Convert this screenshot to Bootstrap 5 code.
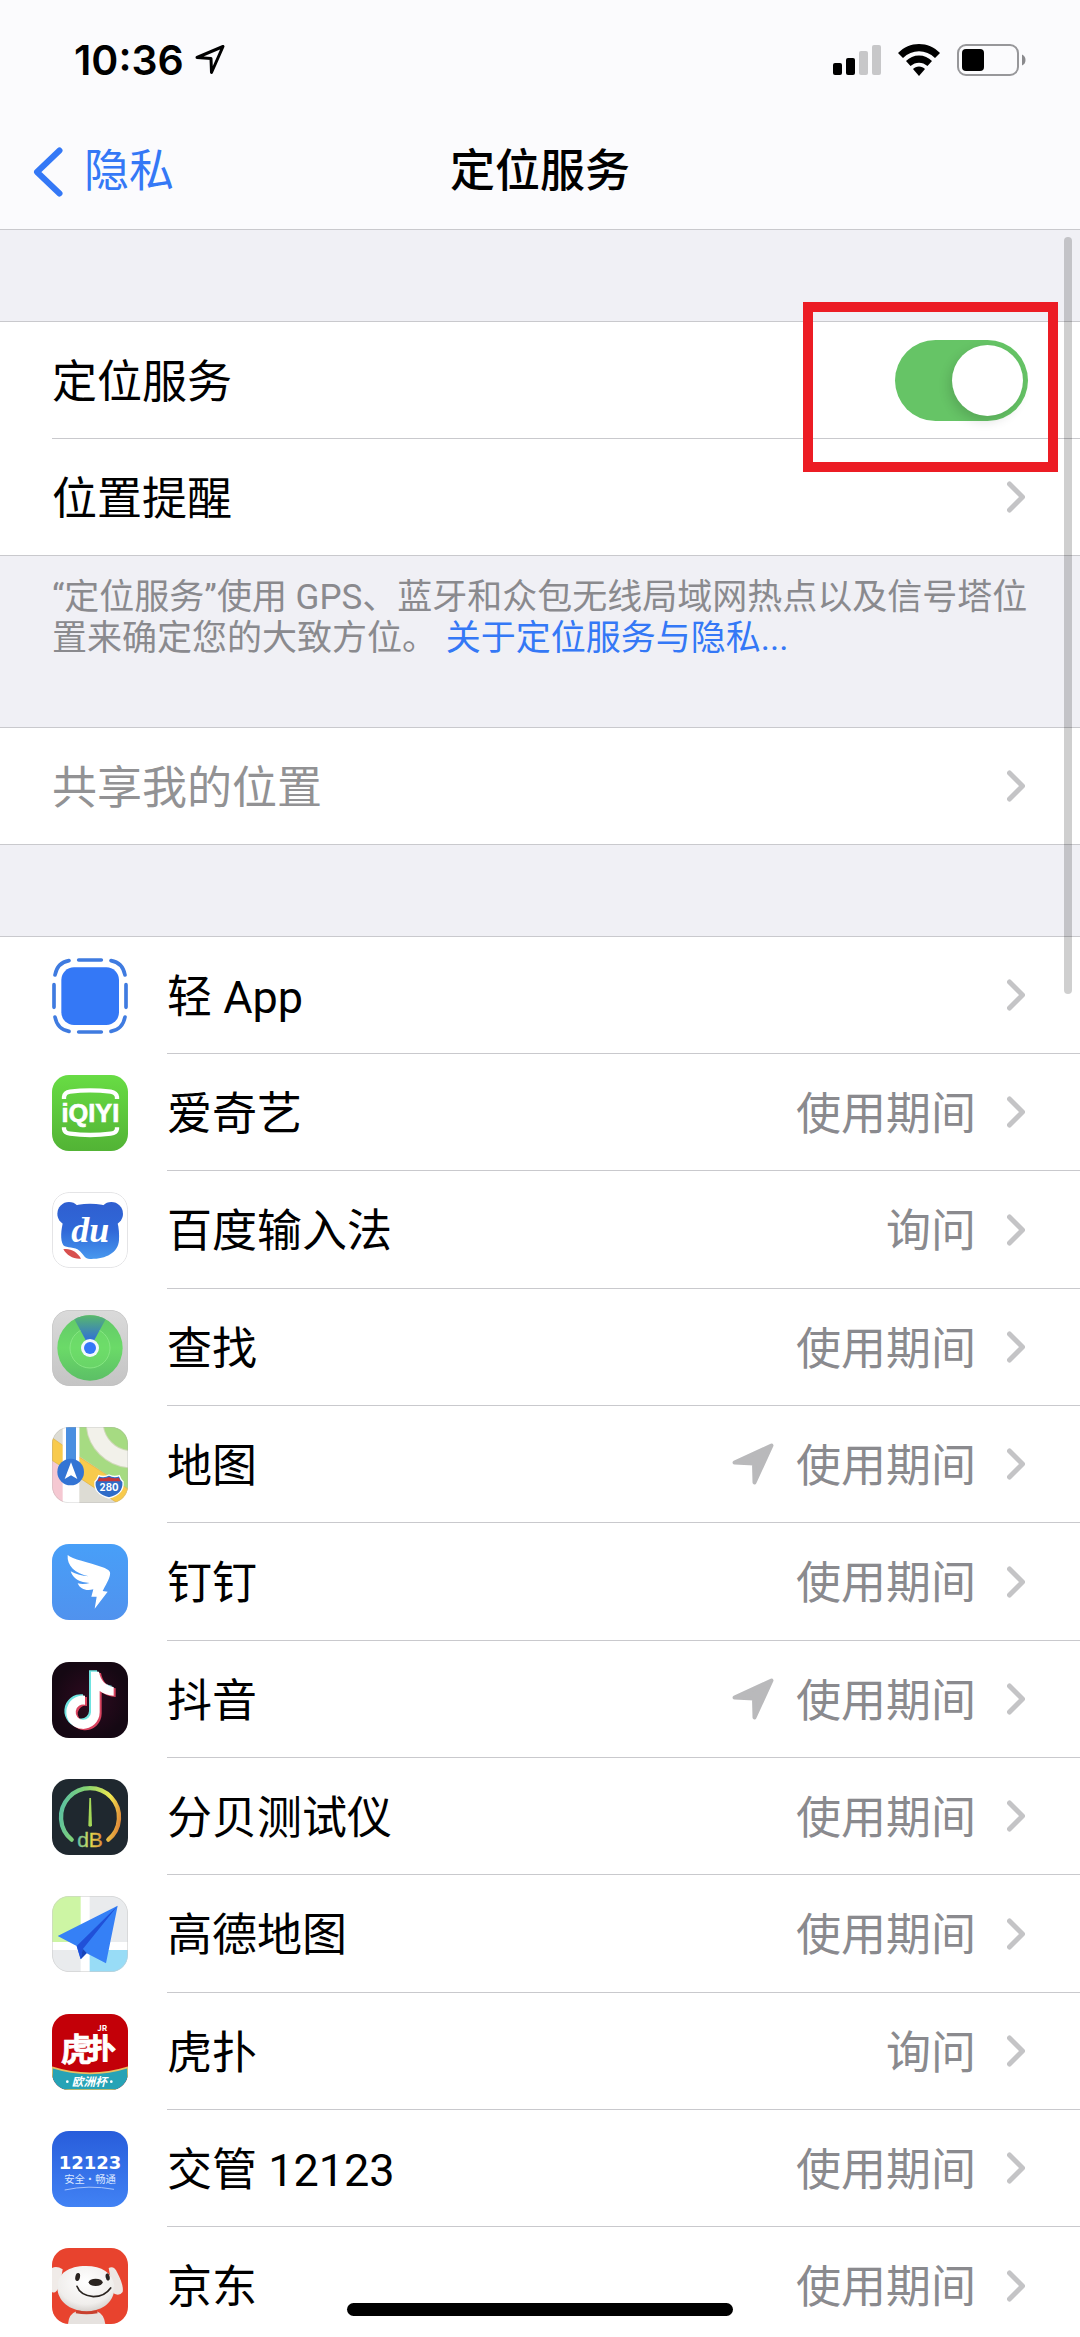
<!DOCTYPE html>
<html lang="zh-CN">
<head>
<meta charset="utf-8">
<meta name="viewport" content="width=device-width, initial-scale=1">
<title>定位服务</title>
<link href="https://cdn.jsdelivr.net/npm/bootstrap@5.3.0/dist/css/bootstrap.min.css" rel="stylesheet">
<style>
  :root { --ink: #000; --muted: #8a8a8e; --blue: #3478f6; --line: #c9c9cd; --ground: #f0f0f5; }
  body { font-family: Roboto, "Noto Sans CJK SC", sans-serif; font-size: 45px; line-height: 60px; color: var(--ink); background: var(--ground); }
  a { text-decoration: none; }
  .topbar { background: #fbfbfd; border-bottom: 1px solid var(--line); }
  .statusbar { height: 115px; padding: 4px 54px 0 74px; }
  .status-icons { gap: 17px; }
  .clock { font-family: Inter, sans-serif; font-size: 41px; font-weight: 600; }
  .titlebar { height: 114px; padding: 0 33px; }
  .titlebar h1 { font-size: 45px; line-height: 60px; font-weight: 500; }
  .back { color: var(--blue); gap: 21px; }
  .group { background: #fff; border-top: 1px solid var(--line); }
  .entry { height: 117px; padding-left: 52px; color: var(--ink); background: #fff; }
  .entry:hover { color: var(--ink); }
  .entry-body { border-bottom: 1px solid var(--line); padding-right: 55px; gap: 31px; }
  .entry-body > span, .entry-body > label { padding-top: 5px; }
  .entry-last { border-bottom: 1px solid var(--line); }
  .entry-last .entry-body { border-bottom: 0; }
  .apps .entry { gap: 39px; }
  .apps .entry:nth-child(3n) { height: 118px; }
  .gap-block { height: 91px; }
  .note { font-size: 35px; line-height: 41px; color: var(--muted); padding: 21px 48px 68px 52px; }
  .note a { color: var(--blue); }
  .value { color: var(--muted); }
  .off, .off:hover { color: #929294; }
  .chev { width: 18px; height: 32px; fill: none; stroke: #c4c4c6; stroke-width: 5; stroke-linecap: round; stroke-linejoin: round; }
  .near { width: 42px; height: 42px; fill: #b9b9bb; stroke: #b9b9bb; stroke-width: 4; stroke-linejoin: round; margin-right: -9px; }
  .app-icon { width: 76px; height: 76px; border-radius: 17px; flex: none; }
  .toggle.form-check-input { width: 133px; height: 81px; margin: 0 -3px 0 0; padding: 5px; border: 0; border-radius: 41px; background: #66c466; display: flex; justify-content: flex-end; }
  .toggle.form-check-input:not(:checked) { background: #e9e9ea; justify-content: flex-start; }
  .toggle::before { content: ""; width: 71px; height: 71px; border-radius: 50%; background: #fff; box-shadow: -3px 5px 12px rgba(0,0,0,.14); }
  .highlight { top: -20px; right: 22px; width: 255px; height: 170px; border: 10px solid #ec1c24; pointer-events: none; z-index: 2; }
  .scroller { top: 7px; right: 8px; width: 8px; height: 757px; border-radius: 4px; background: rgba(0,0,0,.19); z-index: 3; }
  .home-bar { bottom: 21px; width: 386px; height: 13px; border-radius: 7px; background: #000; z-index: 4; }
</style>
<script src="https://cdn.jsdelivr.net/npm/bootstrap@5.3.0/dist/js/bootstrap.bundle.min.js"></script>
</head>
<body class="vh-100 overflow-hidden d-flex flex-column">

<svg class="d-none" aria-hidden="true">
  <symbol id="chevron" viewBox="0 0 18 32"><path d="M2.500 3 L15.500 16 L2.500 29"/></symbol>
  <symbol id="arrow" viewBox="0 0 42 42"><path d="M2.500 19.500 L39.500 2.500 L22.500 39.500 L22 20.500 Z"/></symbol>
</svg>

<header class="topbar flex-shrink-0">
  <div class="statusbar d-flex align-items-center justify-content-between">
    <div class="d-flex align-items-center gap-2">
      <span class="clock">10:36</span>
      <svg width="34" height="30" viewBox="0 0 34 30" fill="none" stroke="#000" stroke-width="3" stroke-linejoin="round" aria-hidden="true"><path d="M5 12.500 L31 1.500 L19.500 27.500 L19 13.500 Z"/></svg>
    </div>
    <div class="status-icons d-flex align-items-center">
      <svg width="48" height="32" viewBox="0 0 48 32" aria-label="信号"><rect x="0" y="19" width="9" height="12" rx="2"/><rect x="13" y="14" width="9" height="17" rx="2"/><rect x="26" y="7" width="9" height="24" rx="2" fill="#c7c7c9"/><rect x="39" y="1" width="9" height="30" rx="2" fill="#c7c7c9"/></svg>
      <svg width="42" height="32" viewBox="0 0 42 32" aria-label="无线局域网"><path d="M21 0 C29 0 36 3 42 9 L37 14 C28 5 14 5 5 14 L0 9 C6 3 13 0 21 0Z"/><path d="M21 11.500 C26 11.500 30.500 13.500 34 17 L29.500 22 C24.500 17.500 17.500 17.500 12.500 22 L8 17 C11.500 13.500 16 11.500 21 11.500Z"/><path d="M21 22.500 C23.500 22.500 25.500 23.500 27 25 L21 32 L15 25 C16.500 23.500 18.500 22.500 21 22.500Z"/></svg>
      <svg width="69" height="32" viewBox="0 0 69 32" aria-label="电池"><rect x="1" y="1" width="60" height="30" rx="8" fill="none" stroke="#97979a" stroke-width="2"/><rect x="5" y="5" width="22" height="22" rx="4"/><path d="M65 10.500 Q68.500 12 68.500 16 Q68.500 20 65 21.500Z" fill="#8a8a8d"/></svg>
    </div>
  </div>
  <nav class="titlebar row g-0 align-items-center flex-nowrap">
    <div class="col d-flex"><a class="back d-flex align-items-center" href="#"><svg width="30" height="50" viewBox="0 0 30 50" fill="none" stroke="#3478f6" stroke-width="6" stroke-linecap="round" stroke-linejoin="round" aria-hidden="true"><path d="M26.500 3.500 L4 25 L26.500 46.500"/></svg><span>隐私</span></a></div>
    <div class="col-auto"><h1 class="m-0">定位服务</h1></div>
    <div class="col"></div>
  </nav>
</header>

<main class="flex-fill overflow-hidden position-relative">
  <div class="scroller position-absolute"></div>
  <div class="gap-block"></div>

  <section class="group position-relative">
    <div class="entry d-flex">
      <div class="entry-body flex-fill d-flex align-items-center">
        <label class="flex-fill" for="loc">定位服务</label>
        <input class="toggle form-check-input" type="checkbox" role="switch" id="loc" checked>
      </div>
    </div>
    <a class="entry entry-last d-flex" href="#">
      <div class="entry-body flex-fill d-flex align-items-center"><span class="flex-fill">位置提醒</span><svg class="chev"><use href="#chevron"/></svg></div>
    </a>
    <div class="highlight position-absolute"></div>
  </section>
  <p class="note m-0">“定位服务”使用 GPS、蓝牙和众包无线局域网热点以及信号塔位置来确定您的大致方位。 <a href="#">关于定位服务与隐私...</a></p>

  <section class="group">
    <a class="entry entry-last d-flex off" href="#">
      <div class="entry-body flex-fill d-flex align-items-center"><span class="flex-fill">共享我的位置</span><svg class="chev"><use href="#chevron"/></svg></div>
    </a>
  </section>
  <div class="gap-block"></div>

  <section class="group apps">
    <a class="entry d-flex" href="#">
      <svg class="app-icon align-self-center rounded-0" viewBox="0 0 228 228" aria-hidden="true"><rect x="28" y="28" width="173" height="173" rx="38" fill="#3478f6"/><g fill="none" stroke="#3f7be0" stroke-width="11" stroke-linecap="round"><path d="M80 6H148M80 222H148M6 80V148M222 80V148M9 51Q16 14 51 8M177 8Q212 14 219 51M9 177Q16 214 51 220M177 220Q212 214 219 177"/></g></svg>
      <div class="entry-body flex-fill d-flex align-items-center"><span class="flex-fill">轻 App</span><svg class="chev"><use href="#chevron"/></svg></div>
    </a>
    <a class="entry d-flex" href="#">
      <svg class="app-icon align-self-center" viewBox="0 0 228 228" aria-hidden="true"><defs><linearGradient id="gq" x2="0" y2="1"><stop stop-color="#68dc44"/><stop offset="1" stop-color="#52b335"/></linearGradient></defs><rect width="228" height="228" fill="url(#gq)"/><path d="M36 72 V66 Q38 52 54 50 Q114 42 176 50 Q193 53 195 66 V72M36 157 V162 Q38 174 54 176 Q114 184 176 176 Q193 174 195 162 V157" fill="none" stroke="#fff" stroke-width="13"/><text x="115" y="142" text-anchor="middle" font-family="Liberation Sans" font-weight="700" font-size="76" fill="#fff" stroke="#fff" stroke-width="2">iQIYI</text></svg>
      <div class="entry-body flex-fill d-flex align-items-center"><span class="flex-fill">爱奇艺</span><span class="value">使用期间</span><svg class="chev"><use href="#chevron"/></svg></div>
    </a>
    <a class="entry d-flex" href="#">
      <svg class="app-icon align-self-center" viewBox="0 0 228 228" aria-hidden="true"><defs><linearGradient id="gd" gradientUnits="userSpaceOnUse" x1="0" y1="30" x2="0" y2="200"><stop stop-color="#2f5fd0"/><stop offset=".5" stop-color="#3068d8"/><stop offset="1" stop-color="#4797ee"/></linearGradient></defs><rect x="1.500" y="1.500" width="225" height="225" rx="50" fill="#fff" stroke="#e4e4e6" stroke-width="3"/><g fill="url(#gd)"><circle cx="51" cy="65" r="35"/><circle cx="178" cy="65" r="35"/><path d="M50 48 Q76 35 114 35 Q152 35 180 48 L196 90 C201 108 202 128 201 145 C198 184 160 202 114 201 C98 200 96 190 84 178 C68 162 44 170 34 160 C24 144 27 112 34 88Z"/></g><path d="M34 172 C54 168 76 180 87 200 C64 202 44 190 34 172Z" fill="#d8504e"/><text x="115" y="151" text-anchor="middle" font-family="Liberation Serif" font-style="italic" font-weight="700" font-size="108" fill="#fff">du</text></svg>
      <div class="entry-body flex-fill d-flex align-items-center"><span class="flex-fill">百度输入法</span><span class="value">询问</span><svg class="chev"><use href="#chevron"/></svg></div>
    </a>
    <a class="entry d-flex" href="#">
      <svg class="app-icon align-self-center" viewBox="0 0 228 228" aria-hidden="true"><defs><linearGradient id="gf" x2="0" y2="1"><stop stop-color="#dadada"/><stop offset="1" stop-color="#c4c4c4"/></linearGradient><linearGradient id="gg" x2="0" y2="1"><stop stop-color="#62c968"/><stop offset=".5" stop-color="#6bda68"/><stop offset="1" stop-color="#5cbf66"/></linearGradient><linearGradient id="gc" x2="0" y2="1"><stop stop-color="#58b86c"/><stop offset=".8" stop-color="#2f6cdc"/></linearGradient></defs><rect x="1" y="1" width="226" height="226" rx="50" fill="url(#gf)" stroke="#b8b8b8" stroke-width="2"/><circle cx="114" cy="114" r="98" fill="url(#gg)"/><circle cx="114" cy="114" r="60" fill="#6fe06a" fill-opacity=".5" stroke="#86e582" stroke-width="3"/><path d="M114 114 L67 28 A98 98 0 0 1 161 28Z" fill="url(#gc)"/><circle cx="114" cy="114" r="27" fill="#f2f8fc"/><circle cx="114" cy="114" r="18" fill="#3478f6"/></svg>
      <div class="entry-body flex-fill d-flex align-items-center"><span class="flex-fill">查找</span><span class="value">使用期间</span><svg class="chev"><use href="#chevron"/></svg></div>
    </a>
    <a class="entry d-flex" href="#">
      <svg class="app-icon align-self-center" viewBox="0 0 228 228" aria-hidden="true"><rect width="228" height="228" fill="#dddcd4"/><path d="M82 0H228V186L82 88Z" fill="#a6db82"/><circle cx="240" cy="-15" r="112" fill="none" stroke="#cfd8b8" stroke-width="54"/><circle cx="240" cy="-15" r="112" fill="none" stroke="#f2f1ea" stroke-width="48"/><path d="M0 100 L34 128 V228 H0Z" fill="#f5c8d2"/><path d="M0 32 L82 90 L228 186 V228 H196 L82 152 L0 100Z" fill="#f8ca4c" stroke="#e0b040" stroke-width="2"/><rect x="32" width="50" height="228" fill="#fff"/><rect x="42" width="30" height="130" fill="#4a8fe0"/><circle cx="56" cy="135" r="40" fill="#3374d4"/><path d="M57 106 L76 156 L57 145 L38 156Z" fill="#fff"/><path d="M140 146 Q156 152 171 144 Q186 152 202 146 Q206 158 213 164 C216 192 200 206 171 213 C142 206 126 192 129 164 Q136 158 140 146Z" fill="#2f6cc8" stroke="#fff" stroke-width="4"/><path d="M142 152 Q157 157 171 150 Q185 157 200 152 L206 163 H136Z" fill="#c4373a"/><text x="171" y="193" text-anchor="middle" font-family="Inter" font-weight="700" font-size="29" fill="#fff">280</text><rect x="1" y="1" width="226" height="226" rx="50" fill="none" stroke="#aaa" stroke-opacity=".5" stroke-width="2"/></svg>
      <div class="entry-body flex-fill d-flex align-items-center"><span class="flex-fill">地图</span><svg class="near"><use href="#arrow"/></svg><span class="value">使用期间</span><svg class="chev"><use href="#chevron"/></svg></div>
    </a>
    <a class="entry d-flex" href="#">
      <svg class="app-icon align-self-center" viewBox="0 0 228 228" aria-hidden="true"><defs><linearGradient id="gt" x2="0" y2="1"><stop stop-color="#489ff8"/><stop offset="1" stop-color="#5092ee"/></linearGradient></defs><rect width="228" height="228" fill="url(#gt)"/><path d="M47 33 C60 46 110 54 152 70 C170 77 176 82 174 92 C172 106 160 124 152 141 L167 143 L128 194 L134 158 L118 158 L124 136 C104 142 84 136 77 118 Q94 122 113 117 C84 116 62 104 56 82 Q80 96 110 97 C70 88 44 66 47 33Z" fill="#fff"/></svg>
      <div class="entry-body flex-fill d-flex align-items-center"><span class="flex-fill">钉钉</span><span class="value">使用期间</span><svg class="chev"><use href="#chevron"/></svg></div>
    </a>
    <a class="entry d-flex" href="#">
      <svg class="app-icon align-self-center" viewBox="0 0 228 228" aria-hidden="true"><defs><radialGradient id="gk"><stop stop-color="#300a20"/><stop offset="1" stop-color="#150813"/></radialGradient><path id="note" d="M116 28 H140 C144 54 160 70 184 74 V100 C168 100 152 94 142 86 V150 A50 50 0 1 1 98 100 V127 A23 23 0 1 0 116 150Z"/></defs><rect width="228" height="228" fill="url(#gk)"/><use href="#note" x="-5" y="-3" fill="#6fe3e0"/><use href="#note" x="7" y="5" fill="#d9435f"/><use href="#note" x="1" y="1" fill="#fff"/></svg>
      <div class="entry-body flex-fill d-flex align-items-center"><span class="flex-fill">抖音</span><svg class="near"><use href="#arrow"/></svg><span class="value">使用期间</span><svg class="chev"><use href="#chevron"/></svg></div>
    </a>
    <a class="entry d-flex" href="#">
      <svg class="app-icon align-self-center" viewBox="0 0 228 228" aria-hidden="true"><defs><linearGradient id="gb" gradientUnits="userSpaceOnUse" x1="25" y1="90" x2="205" y2="130"><stop stop-color="#5cc0a0"/><stop offset=".35" stop-color="#86d470"/><stop offset=".75" stop-color="#f0e850"/><stop offset="1" stop-color="#e08838"/></linearGradient><linearGradient id="gl"><stop stop-color="#5cc0a8"/><stop offset=".5" stop-color="#e0e050"/><stop offset="1" stop-color="#e08838"/></linearGradient></defs><rect width="228" height="228" fill="#1f282f"/><path d="M59 182 A87 87 0 1 1 169 182" fill="none" stroke="url(#gb)" stroke-width="13" stroke-linecap="round"/><path d="M112 57 H117 L120 140 Q114 146 109 140Z" fill="#a4d858"/><text x="114" y="205" text-anchor="middle" font-family="Liberation Sans" font-size="63" fill="url(#gl)" stroke="url(#gl)" stroke-width="1">dB</text></svg>
      <div class="entry-body flex-fill d-flex align-items-center"><span class="flex-fill">分贝测试仪</span><span class="value">使用期间</span><svg class="chev"><use href="#chevron"/></svg></div>
    </a>
    <a class="entry d-flex" href="#">
      <svg class="app-icon align-self-center" viewBox="0 0 228 228" aria-hidden="true"><rect width="228" height="228" fill="#fff"/><path d="M0 0H86V138H0Z" fill="#cdf5a4"/><path d="M113 0H228V138H113ZM0 162H86V228H0Z" fill="#e9ebed"/><path d="M113 162H228V228H113Z" fill="#98dcf6"/><path d="M197 29 L17 120 L74 150 L86 190 L104 172 L162 202Z" fill="#3580f6"/><path d="M197 29 L74 150 L86 190 L92 160Z" fill="#2050d8"/><path d="M92 158 L86 190 L104 171Z" fill="#1a44b8"/><rect x="1" y="1" width="226" height="226" rx="50" fill="none" stroke="#ccc" stroke-width="2"/></svg>
      <div class="entry-body flex-fill d-flex align-items-center"><span class="flex-fill">高德地图</span><span class="value">使用期间</span><svg class="chev"><use href="#chevron"/></svg></div>
    </a>
    <a class="entry d-flex" href="#">
      <svg class="app-icon align-self-center" viewBox="0 0 228 228" aria-hidden="true"><rect width="228" height="228" fill="#c30008"/><path d="M0 160 Q114 196 228 160 V228 H0Z" fill="#26a3b6" stroke="#e8c060" stroke-width="5"/><g font-family="Noto Sans CJK SC" font-weight="700" fill="#fff"><text x="74" y="140" text-anchor="middle" font-size="96" stroke="#fff" stroke-width="2">虎</text><text x="150" y="136" text-anchor="middle" font-size="84" stroke="#fff" stroke-width="3">扑</text><text x="151" y="52" text-anchor="middle" font-size="24">JR</text></g><g fill="#fff"><text x="112" y="216" text-anchor="middle" font-family="Noto Sans CJK SC" font-weight="700" font-style="italic" font-size="35">欧洲杯</text><circle cx="46" cy="203" r="4"/><circle cx="178" cy="203" r="4"/></g></svg>
      <div class="entry-body flex-fill d-flex align-items-center"><span class="flex-fill">虎扑</span><span class="value">询问</span><svg class="chev"><use href="#chevron"/></svg></div>
    </a>
    <a class="entry d-flex" href="#">
      <svg class="app-icon align-self-center" viewBox="0 0 228 228" aria-hidden="true"><defs><linearGradient id="gj" x2="0" y2="1"><stop stop-color="#285ddb"/><stop offset="1" stop-color="#4182f4"/></linearGradient></defs><rect width="228" height="228" fill="url(#gj)"/><text x="114" y="115" text-anchor="middle" font-family="DejaVu Sans" font-weight="700" font-size="54" fill="#fff">12123</text><text x="114" y="157" text-anchor="middle" font-family="Noto Sans CJK SC" font-size="31" fill="#dbe8ff">安全·畅通</text><path d="M38 177 Q110 161 186 175" fill="none" stroke="#a8c4fa" stroke-width="3"/></svg>
      <div class="entry-body flex-fill d-flex align-items-center"><span class="flex-fill">交管 12123</span><span class="value">使用期间</span><svg class="chev"><use href="#chevron"/></svg></div>
    </a>
    <a class="entry d-flex" href="#">
      <svg class="app-icon align-self-center" viewBox="0 0 228 228" aria-hidden="true"><defs><radialGradient id="gh" cx=".5" cy=".35" r=".7"><stop stop-color="#fff"/><stop offset=".7" stop-color="#f0eeec"/><stop offset="1" stop-color="#cfcac6"/></radialGradient></defs><rect width="228" height="228" fill="#e8432e"/><path d="M0 60 Q14 52 32 64 L24 110 Q12 140 0 132Z" fill="#f0ebe8"/><path d="M170 60 Q186 52 196 74 Q216 112 212 132 Q202 146 184 136Z" fill="#ece6e3"/><path d="M48 228 Q50 198 74 190 H134 Q156 198 160 228Z" fill="#e6e2df"/><path d="M16 118 C16 76 50 54 102 54 C150 54 180 74 187 112 C190 158 156 188 104 190 C52 190 16 158 16 118Z" fill="url(#gh)"/><path d="M72 191 Q104 197 136 191" fill="none" stroke="#c8402e" stroke-width="9"/><ellipse cx="77" cy="87" rx="7" ry="12" fill="#2a2420" transform="rotate(12 77 87)"/><ellipse cx="167" cy="87" rx="6" ry="11" fill="#2a2420" transform="rotate(-12 167 87)"/><ellipse cx="131" cy="103" rx="21" ry="11" fill="#2a2420"/><path d="M75 115 Q84 142 124 146 Q158 146 176 120" fill="none" stroke="#2a2420" stroke-width="5" stroke-linecap="round"/></svg>
      <div class="entry-body flex-fill d-flex align-items-center"><span class="flex-fill">京东</span><span class="value">使用期间</span><svg class="chev"><use href="#chevron"/></svg></div>
    </a>
  </section>
</main>

<div class="home-bar position-absolute start-50 translate-middle-x"></div>
</body>
</html>
